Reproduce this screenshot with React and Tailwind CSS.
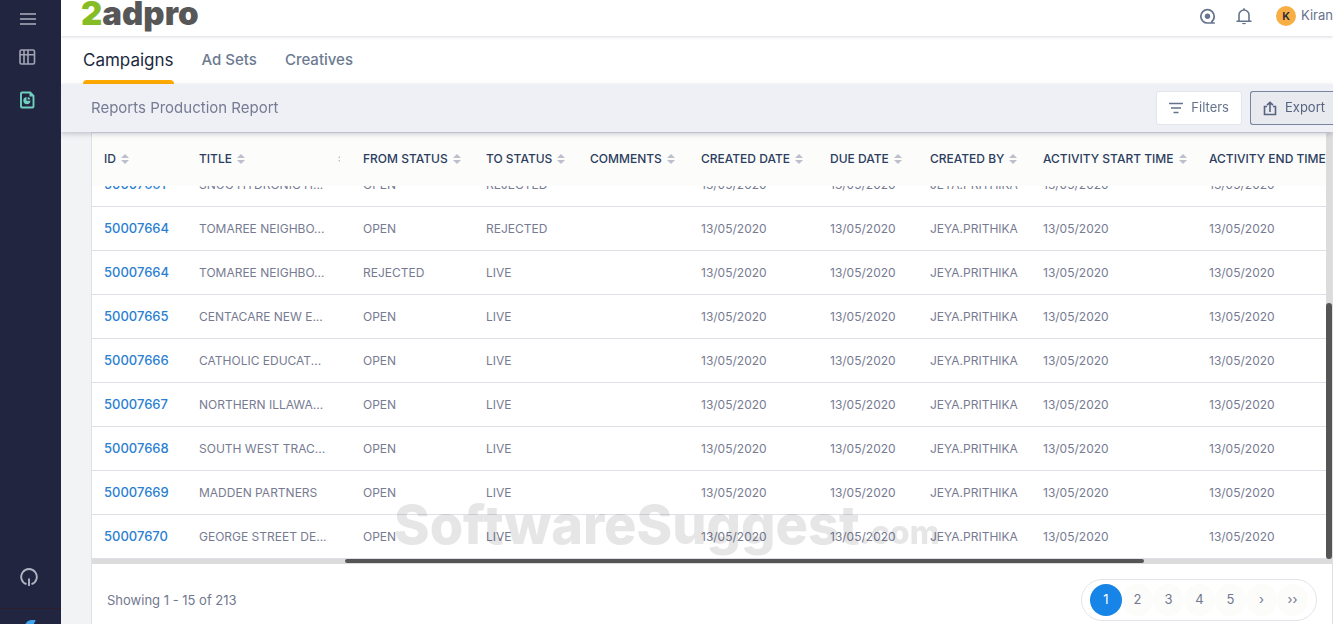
import React, { useLayoutEffect, useRef } from 'react';

const COLUMNS = [
  { key: 'id', label: 'ID', col: 'w-[95px]' },
  { key: 'title', label: 'TITLE', col: 'w-[139px]' },
  { key: 'spacer', label: '', col: 'w-[25px]' },
  { key: 'from', label: 'FROM STATUS', col: 'w-[123px]' },
  { key: 'to', label: 'TO STATUS', col: 'w-[104px]' },
  { key: 'comments', label: 'COMMENTS', col: 'w-[111px]' },
  { key: 'created', label: 'CREATED DATE', col: 'w-[129px]' },
  { key: 'due', label: 'DUE DATE', col: 'w-[100px]' },
  { key: 'by', label: 'CREATED BY', col: 'w-[113px]' },
  { key: 'start', label: 'ACTIVITY START TIME', col: 'w-[166px]' },
  { key: 'end', label: 'ACTIVITY END TIME', col: 'w-[166px]' },
];

const DAY = '13/05/2020';

const ROWS = [
  ['50007661', 'SNUG HYDRONIC H...', 'OPEN', 'REJECTED'],
  ['50007664', 'TOMAREE NEIGHBO...', 'OPEN', 'REJECTED'],
  ['50007664', 'TOMAREE NEIGHBO...', 'REJECTED', 'LIVE'],
  ['50007665', 'CENTACARE NEW E...', 'OPEN', 'LIVE'],
  ['50007666', 'CATHOLIC EDUCAT...', 'OPEN', 'LIVE'],
  ['50007667', 'NORTHERN ILLAWA...', 'OPEN', 'LIVE'],
  ['50007668', 'SOUTH WEST TRAC...', 'OPEN', 'LIVE'],
  ['50007669', 'MADDEN PARTNERS', 'OPEN', 'LIVE'],
  ['50007670', 'GEORGE STREET DE...', 'OPEN', 'LIVE'],
].map(([id, title, from, to]) => ({
  id, title, from, to, created: DAY, due: DAY, by: 'JEYA.PRITHIKA', start: DAY, end: DAY,
}));

const PAGES = ['1', '2', '3', '4', '5', '›', '››'];

function SortIcon() {
  return (
    <svg width="8" height="10" viewBox="0 0 8 10" fill="#bcc0cc" className="shrink-0">
      <path d="M4 0L8 4H0z" />
      <path d="M0 6h8L4 10z" />
    </svg>
  );
}

function Sidebar() {
  return (
    <aside className="flex w-[61px] shrink-0 flex-col bg-[#222540]">
      <nav className="flex flex-1 flex-col items-start gap-6 pt-3 pl-[19px]">
        <button aria-label="Menu" className="flex h-3 items-center">
          <svg width="18" height="14" viewBox="0 0 18 14" stroke="#8b8d9f" strokeWidth="2">
            <path d="M1 3h16M1 8h16M1 13h16" />
          </svg>
        </button>
        <a href="#dashboard" aria-label="Dashboard" className="flex h-[18px] items-center">
          <svg width="17" height="18" viewBox="0 0 17 18" fill="none" stroke="#a3a5b5" strokeWidth="1.6">
            <rect x="1" y="2" width="14.5" height="14" rx="1.5" />
            <path d="M5 2v14M9 2v14M1 6.800h14.500" />
          </svg>
        </a>
        <a href="#reports" aria-label="Reports" className="flex h-5 items-center">
          <svg width="17" height="18" viewBox="0 0 17 18" fill="none" stroke="#6fd0bd" strokeWidth="1.9">
            <path d="M3 1.500h8.200L14.500 5v10.500a1 1 0 0 1-1 1H3a1 1 0 0 1-1-1v-13a1 1 0 0 1 1-1z" />
            <path d="M10.500 1v4.500h4.500z" fill="#6fd0bd" stroke="none" />
            <path d="M7.500 6A3.600 3.600 0 1 0 11.500 9.800H7.500z" fill="#6fd0bd" stroke="none" />
            <path d="M8.600 8.600V6a3 3 0 0 1 2.800 2.600z" fill="#6fd0bd" stroke="none" />
          </svg>
        </a>
      </nav>
      <button aria-label="Power" className="mb-5 ml-5 flex">
        <svg width="18" height="20" viewBox="0 0 18 20" fill="none" stroke="#b2b4c2" strokeWidth="1.9">
          <path d="M6.500 16.200A7.800 7.800 0 1 1 11.500 16.200" />
          <path d="M9 10.500v7.500" />
        </svg>
      </button>
      <div className="flex h-4 justify-center overflow-hidden border-t border-[#2d1e2c] pt-[11px]">
        <svg width="12" height="12" viewBox="0 0 12 12" fill="#3fa4f0" className="shrink-0">
          <path d="M10.500 0H7Q2 0 0 5v7h9V3q1.500-.500 1.500-3z" />
        </svg>
      </div>
    </aside>
  );
}

function TopBar() {
  return (
    <header className="relative z-10 flex h-9 shrink-0 items-center justify-between bg-white pl-5 shadow-[0_1px_3px_rgba(40,45,70,0.18)]">
      <a href="#home" className="-mt-2.5 font-['Inter'] text-[33px] leading-9 font-black text-[#575757]">
        <span className="text-[#86bd24]">2</span>adpro
      </a>
      <div className="-mt-1 flex items-center text-[#66738c]">
        <button aria-label="Search" className="mr-5">
          <svg width="17" height="17" viewBox="0 0 17 17" fill="none" stroke="currentColor" strokeWidth="1.7">
            <path d="M15.800 15H8.500A6.700 6.700 0 1 1 15.200 8.300Q15.200 12 12.200 14.300" />
            <circle cx="8.500" cy="8.300" r="2.700" fill="currentColor" stroke="none" />
          </svg>
        </button>
        <button aria-label="Notifications" className="mr-6">
          <svg width="16" height="17" viewBox="0 0 16 17" fill="none" stroke="currentColor" strokeWidth="1.600">
            <path d="M.500 13.200h15M3 13V7a5 5 0 0 1 10 0v6M8 .300V2" />
            <path d="M6 15a2 1.300 0 0 0 4 0z" fill="currentColor" stroke="none" />
          </svg>
        </button>
        <span className="mr-[5px] flex size-5 items-center justify-center rounded-full bg-[#f7ae45] text-[11px] font-semibold text-[#25263b]">K</span>
        <span className="text-[13px]">Kiran</span>
      </div>
    </header>
  );
}

function Tabs() {
  return (
    <nav className="flex h-12 shrink-0 items-stretch gap-7 bg-white pl-[22px] text-[15px] font-medium text-[#6c7a90]">
      <a href="#campaigns" className="flex flex-col justify-between pt-3 text-[17px] font-normal text-[#1c2a40]">
        <span className="leading-6">Campaigns</span>
        <span className="h-1 rounded-t bg-[#ffab00]" />
      </a>
      <a href="#adsets" className="pt-3 leading-6">Ad Sets</a>
      <a href="#creatives" className="pt-3 leading-6">Creatives</a>
    </nav>
  );
}

function Toolbar() {
  return (
    <div className="relative z-10 flex h-12 shrink-0 items-center justify-between bg-[#eff0f5] pl-[30px] shadow-[0_2px_5px_rgba(50,55,90,0.25)]">
      <h1 className="text-[15px] text-[#747b93]">Reports Production Report</h1>
      <div className="flex gap-2 text-[13px]">
        <button className="flex h-[34px] items-center gap-2 rounded-[3px] border border-[#e2e4e9] bg-white px-3 text-[#66738c]">
          <svg width="14" height="12" viewBox="0 0 14 12" stroke="currentColor" strokeWidth="1.600">
            <path d="M0 1.500h14M2 6h10M4.500 10.500h5" />
          </svg>
          Filters
        </button>
        <button className="flex h-[34px] items-center gap-2 rounded-l-[3px] border border-r-0 border-[#76849e] bg-[#e9eaf0] pr-2 pl-3 text-[#56647f]">
          <svg width="14" height="15" viewBox="0 0 14 15" fill="none" stroke="currentColor" strokeWidth="1.600">
            <path d="M4 5.500H1.500v8h11v-8H10M7 11V1.500M4 4.200L7 1.300l3 2.900" />
          </svg>
          Export
        </button>
      </div>
    </div>
  );
}

function ReportTable() {
  const scroller = useRef(null);

  // open on the last rows of the page
  useLayoutEffect(() => {
    scroller.current.scrollTop = scroller.current.scrollHeight;
  }, []);

  return (
    <div className="flex min-h-0 flex-1 flex-col">
      <div className="relative flex min-h-0 flex-1">
        <div ref={scroller} className="min-w-0 flex-1 overflow-hidden">
          <table className="w-[1271px] table-fixed border-separate border-spacing-0 text-left text-xs whitespace-nowrap">
            <colgroup>
              {COLUMNS.map((c) => <col key={c.key} className={c.col} />)}
            </colgroup>
            <thead>
              <tr>
                {COLUMNS.map((c) => (
                  <th key={c.key} className="sticky top-0 h-[53px] overflow-hidden bg-[#fcfcfa] px-3 pt-0 pb-0.5 font-medium text-[#2b3d60]">
                    {c.label ? (
                      <button className="flex items-center gap-[5px]">{c.label}<SortIcon /></button>
                    ) : (
                      <span className="flex w-[2px] overflow-hidden"><SortIcon /></span>
                    )}
                  </th>
                ))}
              </tr>
            </thead>
            <tbody>
              {ROWS.map((row, i) => (
                <tr key={i}>
                  {COLUMNS.map((c) => (
                    <td key={c.key} className="h-11 border-b border-[#dfe0e6] px-3 text-[#777b92]">
                      {c.key === 'id'
                        ? <a href={`#${row.id}`} className="text-[13px] font-medium text-[#2a7fd0]">{row.id}</a>
                        : row[c.key]}
                    </td>
                  ))}
                </tr>
              ))}
            </tbody>
          </table>
        </div>
        <div className="flex w-[6px] shrink-0 flex-col justify-end bg-[#dcdcdc]">
          <div className="h-3/5 rounded-sm bg-[#555]" />
        </div>
        <div className="pointer-events-none absolute bottom-0 left-[302px] font-['Inter'] text-[54px] leading-[52px] font-extrabold whitespace-nowrap text-[#e6e6e6] mix-blend-multiply">
          SoftwareSuggest<span className="text-[32px]">.com</span>
        </div>
      </div>
      <div className="flex h-[5px] shrink-0 bg-[#dcdcdc] pl-[253px]">
        <div className="h-1 w-[81%] rounded-sm bg-[#555]" />
      </div>
    </div>
  );
}

function Footer() {
  return (
    <footer className="flex h-[60px] shrink-0 items-start justify-between pt-[15px] pr-[15px] pl-[15px] text-[13px] text-[#717890]">
      <p className="leading-[42px]">Showing 1 - 15 of 213</p>
      <div className="flex h-[42px] items-center rounded-full border border-[#e4e4ea] pr-2 pl-2">
        {PAGES.map((p) => (
          <button
            key={p}
            className={p === '1'
              ? 'h-8 w-8 rounded-full bg-[#1785e8] text-white'
              : 'h-8 w-[31px] rounded-full bg-[#fcfcfa]'}
          >
            {p}
          </button>
        ))}
      </div>
    </footer>
  );
}

export default function App() {
  return (
    <div className="flex h-screen overflow-hidden bg-[#f1f3f5] font-['Inter',sans-serif]">
      <Sidebar />
      <div className="flex min-w-0 flex-1 flex-col">
        <TopBar />
        <Tabs />
        <Toolbar />
        <main className="ml-[30px] flex min-h-0 flex-1 flex-col border-x border-t border-[#dfe0e6] bg-white">
          <ReportTable />
          <Footer />
        </main>
      </div>
    </div>
  );
}
